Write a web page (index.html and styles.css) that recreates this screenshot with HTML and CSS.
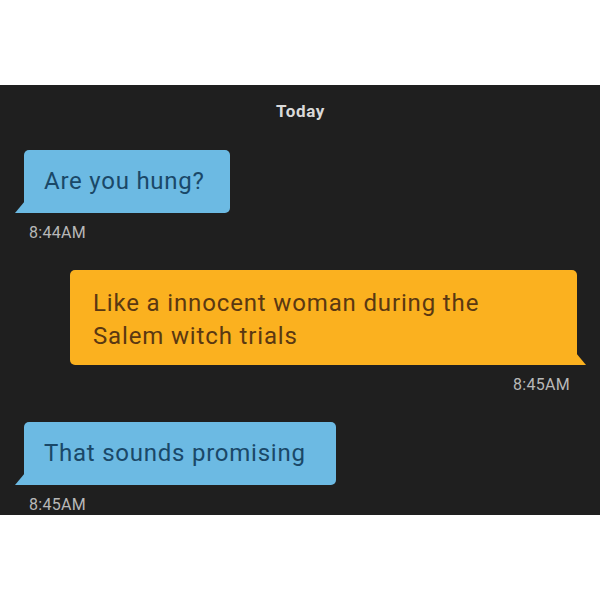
FILE: index.html
```html
<!DOCTYPE html>
<html>
<head>
<meta charset="utf-8">
<link rel="stylesheet" href="styles.css">
</head>
<body>
<div class="chat">
  <div class="day">Today</div>
  <div class="msg in">
    <div class="bubble blue">Are you hung?</div>
    <div class="time">8:44AM</div>
  </div>
  <div class="msg out">
    <div class="bubble orange">Like a innocent woman during the<br>Salem witch trials</div>
    <div class="time">8:45AM</div>
  </div>
  <div class="msg in">
    <div class="bubble blue wide">That sounds promising</div>
    <div class="time">8:45AM</div>
  </div>
</div>
</body>
</html>
```
FILE: styles.css
```css
html, body {
  margin: 0;
  padding: 0;
  background: #ffffff;
}
body {
  width: 600px;
  height: 600px;
  font-family: Roboto, "Liberation Sans", sans-serif;
}
.chat {
  margin-top: 85px;
  height: 430px;
  box-sizing: border-box;
  background: #1f1f1f;
  padding: 16px 23px 0 24px;
  display: flex;
  flex-direction: column;
}
.day {
  text-align: center;
  color: #d9d9d9;
  font-weight: 700;
  font-size: 17px;
  letter-spacing: 0.6px;
  line-height: 20px;
  margin-bottom: 29px;
}
.msg {
  display: flex;
  flex-direction: column;
  margin-bottom: 27px;
}
.msg.in { align-items: flex-start; }
.msg.out { align-items: flex-end; }
.bubble {
  position: relative;
  border-radius: 5px;
  font-size: 24px;
  letter-spacing: 0.76px;
  line-height: 31px;
  padding: 16px 25px 16px 20px;
}
.bubble.wide { padding-right: 30px; }
.bubble.blue {
  background: #6cbae3;
  color: #1a4868;
}
.bubble.orange {
  background: #fbb11f;
  color: #5a3812;
  width: 507px;
  box-sizing: border-box;
  line-height: 33px;
  letter-spacing: 0.85px;
  padding: 17px 24px 12px 23px;
}
.bubble.blue::before {
  content: "";
  position: absolute;
  left: -9px;
  bottom: 0;
  width: 0;
  height: 0;
  border-bottom: 12px solid #6cbae3;
  border-left: 10px solid transparent;
}
.bubble.orange::after {
  content: "";
  position: absolute;
  right: -9px;
  bottom: 0;
  width: 0;
  height: 0;
  border-bottom: 12px solid #fbb11f;
  border-right: 10px solid transparent;
}
.bubble.blue { border-bottom-left-radius: 0; }
.bubble.orange { border-bottom-right-radius: 0; }
.time {
  color: #b8b8b8;
  font-size: 16px;
  letter-spacing: 0.3px;
  line-height: 20px;
  margin-top: 10px;
}
.msg.in .time { margin-left: 5px; }
.msg.out .time { margin-right: 7px; }
```
